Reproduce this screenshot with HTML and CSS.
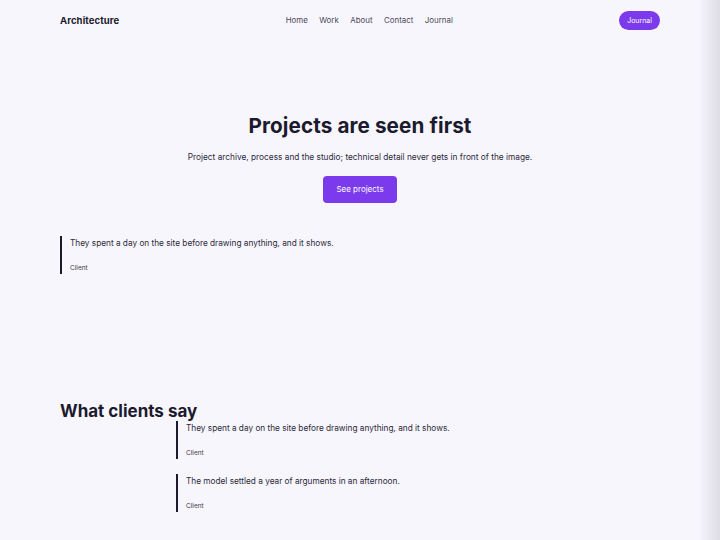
FILE: index.html
```html
<!DOCTYPE html>
<html lang="en">
<head>
<meta charset="utf-8">
<title>Architecture</title>
<link rel="stylesheet" href="styles.css">
</head>
<body>
<div class="page">
  <header class="nav">
    <div class="brand">Architecture</div>
    <nav class="links">
      <a href="#">Home</a>
      <a href="#">Work</a>
      <a href="#">About</a>
      <a href="#">Contact</a>
      <a href="#">Journal</a>
    </nav>
    <a class="pill" href="#">Journal</a>
  </header>

  <section class="hero">
    <h1>Projects are seen first</h1>
    <p class="lead">Project archive, process and the studio; technical detail never gets in front of the image.</p>
    <a class="cta" href="#">See projects</a>
  </section>

  <blockquote class="quote">
    <p>They spent a day on the site before drawing anything, and it shows.</p>
    <cite>Client</cite>
  </blockquote>

  <section class="clients">
    <h2>What clients say</h2>
    <div class="quotes">
      <blockquote class="quote">
        <p>They spent a day on the site before drawing anything, and it shows.</p>
        <cite>Client</cite>
      </blockquote>
      <blockquote class="quote">
        <p>The model settled a year of arguments in an afternoon.</p>
        <cite>Client</cite>
      </blockquote>
    </div>
  </section>
</div>
<div class="edge"></div>
</body>
</html>
```
FILE: styles.css
```css
* { box-sizing: border-box; }
html, body { margin: 0; padding: 0; }
body {
  background: #f8f6fd;
  color: #1c1a2e;
  font-family: "Inter", "Liberation Sans", sans-serif;
  height: 540px;
  overflow: hidden;
}
.page { width: 600px; margin: 0 auto; }
.nav {
  height: 40px;
  display: flex;
  align-items: center;
  justify-content: space-between;
}
.brand { font-size: 9.5px; font-weight: 700; letter-spacing: 0.1px; }
.links { display: flex; gap: 11.5px; }
.links a { font-size: 7.9px; color: #4a4858; text-decoration: none; }
.pill {
  background: #7c3aed;
  color: #fff;
  font-size: 7px;
  text-decoration: none;
  height: 19px;
  line-height: 19px;
  padding: 0 8px;
  border-radius: 10px;
}
.hero { display: flex; flex-direction: column; align-items: center; }
.hero h1 {
  margin: 74px 0 0;
  font-size: 20.7px;
  line-height: 24px;
  font-weight: 700;
  letter-spacing: 0.1px;
}
.lead {
  margin: 12px 0 0;
  font-size: 8.3px;
  line-height: 14px;
  color: #2c2a3c;
}
.cta {
  margin-top: 12px;
  background: #7c3aed;
  color: #fff;
  text-decoration: none;
  font-size: 8px;
  height: 27px;
  line-height: 27px;
  padding: 0 13px;
  border-radius: 4px;
}
.quote {
  margin: 33px 0 0;
  border-left: 2px solid #1c1a2e;
  padding: 0 0 1px 8px;
}
.quote p { margin: 0; font-size: 8.25px; line-height: 14px; color: #2c2a3c; }
.quote cite {
  display: block;
  margin-top: 13px;
  font-style: normal;
  font-size: 6.5px;
  line-height: 10px;
  color: #3a3848;
}
.clients { margin-top: 128px; }
.clients h2 {
  margin: 0;
  font-size: 17px;
  line-height: 19px;
  font-weight: 700;
}
.quotes { padding-left: 116px; display: flex; flex-direction: column; gap: 15px; }
.quotes .quote { margin: 0; padding-top: 0; }
.edge {
  position: fixed;
  top: 0;
  right: 0;
  width: 22px;
  height: 540px;
  background: linear-gradient(to right, rgba(200,198,210,0), rgba(200,198,210,0.55));
}
```
